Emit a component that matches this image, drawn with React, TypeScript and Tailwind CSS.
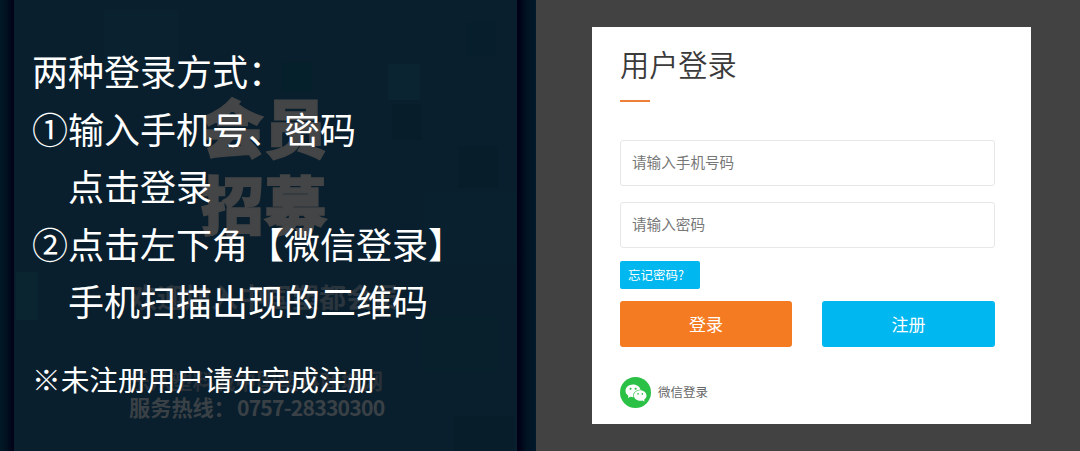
import React, { useState } from "react";
import { AiFillWechat } from "react-icons/ai";

interface Step {
  id: string;
  text: string;
  indent: boolean;
}

const steps: Step[] = [
  { id: "title", text: "两种登录方式：", indent: false },
  { id: "phone", text: "①输入手机号、密码", indent: false },
  { id: "click", text: "点击登录", indent: true },
  { id: "wechat", text: "②点击左下角【微信登录】", indent: false },
  { id: "scan", text: "手机扫描出现的二维码", indent: true },
];

// 背景色块
const tiles = [
  { x: 90, y: 10, w: 74, h: 60, fill: "#0a2230" },
  { x: 268, y: 62, w: 30, h: 30, fill: "#06202b" },
  { x: 374, y: 64, w: 32, h: 36, fill: "#0b2432" },
  { x: 378, y: 104, w: 30, h: 36, fill: "#071d29" },
  { x: 444, y: 146, w: 40, h: 42, fill: "#071e2a" },
  { x: 452, y: 22, w: 30, h: 34, fill: "#071f2c" },
  { x: 410, y: 192, w: 92, h: 72, fill: "#09212f" },
  { x: 2, y: 272, w: 22, h: 48, fill: "#0a2430" },
  { x: 408, y: 314, w: 76, h: 60, fill: "#08202b" },
  { x: 440, y: 416, w: 60, h: 35, fill: "#071e2a" },
];

function GuidePanel() {
  return (
    <section className="flex h-full w-[536px] bg-[#021a28]">
      <div className="w-[14px] bg-linear-to-r from-[#011927] via-[#01101f] to-[#010216]" />
      <div className="relative w-[503px] overflow-hidden bg-[#0a1f2d]">
        <svg className="absolute inset-0" width="503" height="451">
          {tiles.map((tile) => (
            <rect
              key={`${tile.x}-${tile.y}`}
              x={tile.x}
              y={tile.y}
              width={tile.w}
              height={tile.h}
              fill={tile.fill}
            />
          ))}
        </svg>

        {/* 海报底图文字 */}
        <div className="absolute top-[86px] left-[187px] text-[63px] leading-[77px] font-black whitespace-nowrap text-[#444546] [-webkit-text-stroke:1.5px_#444546]">
          <p>会员</p>
          <p>招募</p>
        </div>
        <p className="absolute top-[279px] left-[116px] text-[27px] leading-[36px] font-bold whitespace-nowrap text-[#2b353d]">
          欢迎加入中国塑都会员
        </p>
        <div className="absolute top-[366px] left-[115px] text-[21.2px] leading-[27px] font-bold whitespace-nowrap text-[#3a4146]">
          <p className="text-[#283139]">乐从塑料城中国塑料商城网</p>
          <p>
            服务热线：<span className="ml-[2px] tracking-[-0.8px]">0757-28330300</span>
          </p>
        </div>

        <div className="relative pt-[42px] pl-[18px] whitespace-nowrap text-white">
          <div className="text-[36px] leading-[57.6px]">
            {steps.map((step) => (
              <p key={step.id} className={step.indent ? "pl-[36px]" : ""}>
                {step.text}
              </p>
            ))}
          </div>
          <p className="mt-[29px] text-[28.7px] leading-[40px]">
            ※未注册用户请先完成注册
          </p>
        </div>
      </div>
      <div className="flex-1 bg-linear-to-r from-[#010014] via-[#011322] to-[#01192a]" />
    </section>
  );
}

export default function App() {
  const [phone, setPhone] = useState("");
  const [password, setPassword] = useState("");

  const inputClass =
    "block h-[46px] w-full rounded-[3px] border border-[#e7e7e7] bg-white px-[11px] pb-[3px] text-[14.6px] text-[#555] outline-none placeholder:text-[#777]";

  return (
    <div className="flex h-[451px] w-[1080px] overflow-hidden bg-[#424242] font-['Noto_Sans_CJK_SC',sans-serif]">
      <GuidePanel />

      <main className="flex-1 pt-[27px] pl-[56px]">
        <div className="h-[397px] w-[439px] bg-white px-[28px] pt-[14px]">
          <h1 className="text-[29.2px] leading-[44px] font-[350] text-[#3a3a3a]">
            用户登录
          </h1>
          <div className="mt-[15px] h-[2px] w-[30px] bg-[#ec8038]" />

          {/* 登录表单 */}
          <form className="mt-[38px] w-[375px]" onSubmit={(e) => e.preventDefault()}>
            <input
              className={inputClass}
              placeholder="请输入手机号码"
              value={phone}
              onChange={(e) => setPhone(e.target.value)}
            />
            <input
              type="password"
              className={`${inputClass} mt-[16px]`}
              placeholder="请输入密码"
              value={password}
              onChange={(e) => setPassword(e.target.value)}
            />
            <button
              type="button"
              className="mt-[13px] block h-[28px] w-[80px] rounded-[2px] bg-[#00b7ef] pl-[8px] text-left text-[12.5px] leading-[28px] text-white"
            >
              忘记密码?
            </button>
            <div className="mt-[12px] flex justify-between text-[17px] text-white">
              <button type="submit" className="h-[46px] w-[172px] rounded-[3px] bg-[#f47b22]">
                登录
              </button>
              <button type="button" className="h-[46px] w-[173px] rounded-[3px] bg-[#00b7ef]">
                注册
              </button>
            </div>
          </form>

          {/* 微信登录 */}
          <div className="mt-[30px] flex items-center gap-[7px] text-[12.5px] text-[#666]">
            <span className="flex size-[31px] items-center justify-center rounded-full bg-[#2bc146] text-white">
              <AiFillWechat size={24} />
            </span>
            <span>微信登录</span>
          </div>
        </div>
      </main>
    </div>
  );
}
